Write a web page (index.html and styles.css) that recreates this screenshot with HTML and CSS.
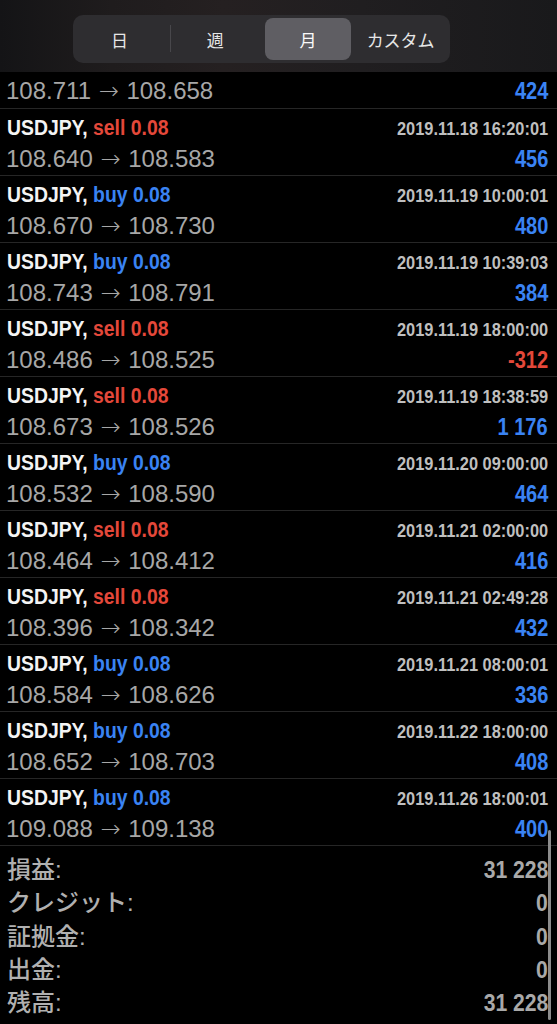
FILE: index.html
```html
<!DOCTYPE html>
<html lang="ja">
<head>
<meta charset="utf-8">
<title>履歴</title>
<link rel="stylesheet" href="styles.css">
</head>
<body>
<div class="screen">
  <header class="header">
    <div class="seg">
      <div class="seg-item sep">日</div>
      <div class="seg-item">週</div>
      <div class="seg-item active">月</div>
      <div class="seg-item">カスタム</div>
    </div>
  </header>

  <div class="list">
    <div class="row partial">
      <div class="line2"><span class="price">108.711 <span class="arr">→</span> 108.658</span><span class="pl pos">424</span></div>
    </div>
    <div class="row">
      <div class="line1"><span class="title">USDJPY, <span class="sell">sell 0.08</span></span><span class="date">2019.11.18 16:20:01</span></div>
      <div class="line2"><span class="price">108.640 <span class="arr">→</span> 108.583</span><span class="pl pos">456</span></div>
    </div>
    <div class="row">
      <div class="line1"><span class="title">USDJPY, <span class="buy">buy 0.08</span></span><span class="date">2019.11.19 10:00:01</span></div>
      <div class="line2"><span class="price">108.670 <span class="arr">→</span> 108.730</span><span class="pl pos">480</span></div>
    </div>
    <div class="row">
      <div class="line1"><span class="title">USDJPY, <span class="buy">buy 0.08</span></span><span class="date">2019.11.19 10:39:03</span></div>
      <div class="line2"><span class="price">108.743 <span class="arr">→</span> 108.791</span><span class="pl pos">384</span></div>
    </div>
    <div class="row">
      <div class="line1"><span class="title">USDJPY, <span class="sell">sell 0.08</span></span><span class="date">2019.11.19 18:00:00</span></div>
      <div class="line2"><span class="price">108.486 <span class="arr">→</span> 108.525</span><span class="pl neg">-312</span></div>
    </div>
    <div class="row">
      <div class="line1"><span class="title">USDJPY, <span class="sell">sell 0.08</span></span><span class="date">2019.11.19 18:38:59</span></div>
      <div class="line2"><span class="price">108.673 <span class="arr">→</span> 108.526</span><span class="pl pos">1 176</span></div>
    </div>
    <div class="row">
      <div class="line1"><span class="title">USDJPY, <span class="buy">buy 0.08</span></span><span class="date">2019.11.20 09:00:00</span></div>
      <div class="line2"><span class="price">108.532 <span class="arr">→</span> 108.590</span><span class="pl pos">464</span></div>
    </div>
    <div class="row">
      <div class="line1"><span class="title">USDJPY, <span class="sell">sell 0.08</span></span><span class="date">2019.11.21 02:00:00</span></div>
      <div class="line2"><span class="price">108.464 <span class="arr">→</span> 108.412</span><span class="pl pos">416</span></div>
    </div>
    <div class="row">
      <div class="line1"><span class="title">USDJPY, <span class="sell">sell 0.08</span></span><span class="date">2019.11.21 02:49:28</span></div>
      <div class="line2"><span class="price">108.396 <span class="arr">→</span> 108.342</span><span class="pl pos">432</span></div>
    </div>
    <div class="row">
      <div class="line1"><span class="title">USDJPY, <span class="buy">buy 0.08</span></span><span class="date">2019.11.21 08:00:01</span></div>
      <div class="line2"><span class="price">108.584 <span class="arr">→</span> 108.626</span><span class="pl pos">336</span></div>
    </div>
    <div class="row">
      <div class="line1"><span class="title">USDJPY, <span class="buy">buy 0.08</span></span><span class="date">2019.11.22 18:00:00</span></div>
      <div class="line2"><span class="price">108.652 <span class="arr">→</span> 108.703</span><span class="pl pos">408</span></div>
    </div>
    <div class="row">
      <div class="line1"><span class="title">USDJPY, <span class="buy">buy 0.08</span></span><span class="date">2019.11.26 18:00:01</span></div>
      <div class="line2"><span class="price">109.088 <span class="arr">→</span> 109.138</span><span class="pl pos">400</span></div>
    </div>
  </div>

  <div class="summary">
    <div class="sum-row"><span class="label">損益:</span><span class="value">31 228</span></div>
    <div class="sum-row"><span class="label">クレジット:</span><span class="value">0</span></div>
    <div class="sum-row"><span class="label">証拠金:</span><span class="value">0</span></div>
    <div class="sum-row"><span class="label">出金:</span><span class="value">0</span></div>
    <div class="sum-row"><span class="label">残高:</span><span class="value">31 228</span></div>
  </div>

  <div class="scrollbar"></div>
</div>
</body>
</html>
```
FILE: styles.css
```css
html, body {
  margin: 0;
  padding: 0;
  background: #000;
}

.screen {
  position: relative;
  width: 557px;
  height: 1024px;
  overflow: hidden;
  background: #000;
  font-family: "Liberation Sans", "Noto Sans CJK JP", sans-serif;
}

/* ---------- header / segmented control ---------- */
.header {
  height: 72px;
  box-sizing: border-box;
  padding-top: 15px;
  background: linear-gradient(90deg, #141416 0%, #1f1c1d 20%, #252021 40%, #201e20 65%, #19191b 100%);
}

.seg {
  margin-left: 73px;
  width: 377px;
  height: 48px;
  box-sizing: border-box;
  padding: 3px;
  border-radius: 10px;
  background: #2e2d30;
  display: grid;
  grid-template-columns: repeat(4, 1fr);
}

.seg-item {
  position: relative;
  display: flex;
  align-items: center;
  justify-content: center;
  font-family: "Noto Sans CJK JP", sans-serif;
  font-size: 17px;
  color: #e6e6e6;
  border-radius: 8px;
}

.seg-item.sep {
  padding-right: 6px;
}

.seg-item.sep::after {
  content: "";
  position: absolute;
  right: -2px;
  top: 7px;
  bottom: 8px;
  width: 1px;
  background: #48474b;
}

.seg-item.active {
  margin: 0 3px;
  background: #5f5e63;
  color: #fafafa;
}

/* ---------- list ---------- */
.row {
  height: 67px;
  box-sizing: border-box;
  border-bottom: 1px solid #262626;
  padding: 0 9px 0 7px;
  display: flex;
  flex-direction: column;
}

.row.partial {
  height: 37px;
}

.row.partial .line2 {
  padding-top: 6px;
}

.line1 {
  display: flex;
  justify-content: space-between;
  align-items: baseline;
  line-height: 37px;
  height: 37px;
}

.line2 {
  display: flex;
  justify-content: space-between;
  align-items: baseline;
  line-height: 26px;
  height: 26px;
}

.title {
  display: inline-block;
  font-weight: bold;
  font-size: 22px;
  color: #f4f4f4;
  white-space: nowrap;
  transform: scaleX(0.88);
  transform-origin: left center;
}

.sell { color: #e4483a; }
.buy { color: #3a83f3; }

.date {
  display: inline-block;
  font-weight: bold;
  font-size: 18px;
  color: #bfbfbf;
  white-space: nowrap;
  transform: scaleX(0.91);
  transform-origin: right center;
}

.price {
  font-size: 24px;
  color: #a7a7a7;
  margin-left: -1px;
  white-space: nowrap;
}

.arr {
  font-family: "DejaVu Sans", sans-serif;
  font-size: 24px;
  font-weight: 200;
  margin: 0 1px;
}

.pl {
  display: inline-block;
  font-weight: bold;
  font-size: 23px;
  white-space: nowrap;
  transform: scaleX(0.87);
  transform-origin: right center;
}

.pl.pos { color: #3a83f3; }
.pl.neg { color: #e4483a; }

/* ---------- summary ---------- */
.summary {
  padding: 7px 9px 0 7px;
}

.sum-row {
  display: flex;
  justify-content: space-between;
  align-items: baseline;
  line-height: 33.3px;
  height: 33.3px;
}

.label {
  font-family: "Liberation Sans", "Noto Sans CJK JP", sans-serif;
  font-size: 24px;
  font-weight: 500;
  color: #b0b0b0;
}

.value {
  display: inline-block;
  font-weight: bold;
  font-size: 23px;
  color: #a9a9a9;
  white-space: nowrap;
  transform: scaleX(0.92);
  transform-origin: right center;
}

/* ---------- overlay scroll indicator ---------- */
.scrollbar {
  position: absolute;
  left: 548px;
  top: 830px;
  width: 3px;
  height: 190px;
  border-radius: 2px;
  background: #8c8c8c;
}
```
